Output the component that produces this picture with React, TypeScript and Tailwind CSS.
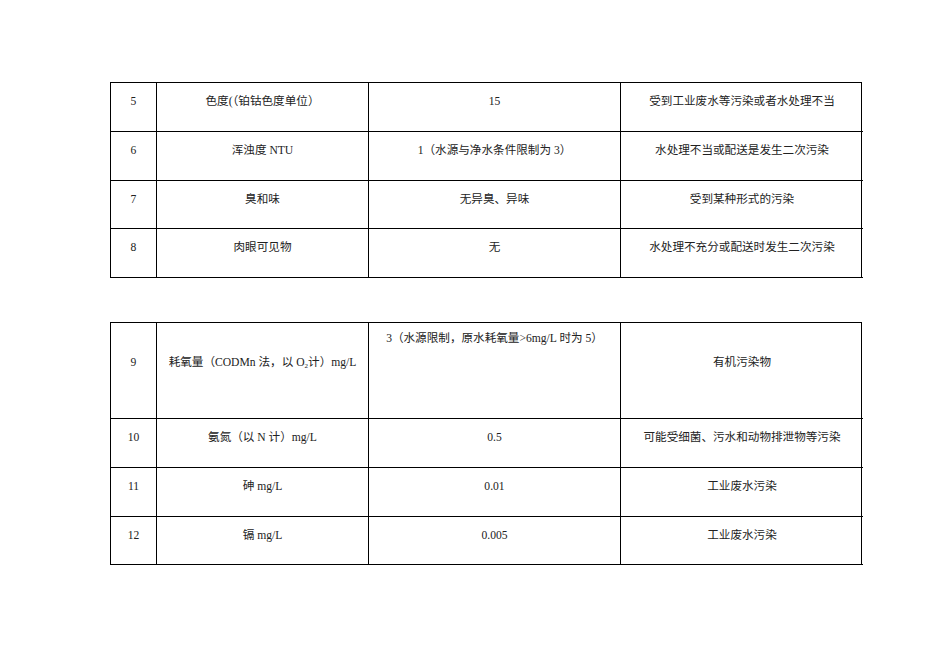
import React from "react";

type Row = {
    no: string;
    item: React.ReactNode;
    limit: React.ReactNode;
    cause: React.ReactNode;
    h: string;
    pt: string;
    limitPt?: string;
};

const table1: Row[] = [
    { no: "5", item: "色度(（铂钴色度单位）", limit: "15", cause: "受到工业废水等污染或者水处理不当", h: "h-[49px]", pt: "pt-[12px]" },
    { no: "6", item: "浑浊度 NTU", limit: "1（水源与净水条件限制为 3）", cause: "水处理不当或配送是发生二次污染", h: "h-[49px]", pt: "pt-[12px]" },
    { no: "7", item: "臭和味", limit: "无异臭、异味", cause: "受到某种形式的污染", h: "h-[48px]", pt: "pt-[12px]" },
    { no: "8", item: "肉眼可见物", limit: "无", cause: "水处理不充分或配送时发生二次污染", h: "h-[49px]", pt: "pt-[12px]" },
];

const table2: Row[] = [
    {
        no: "9",
        item: (
            <>
                耗氧量（CODMn 法，以 O<sub className="text-[7px] align-baseline relative top-[2px]">2</sub>计）mg/L
            </>
        ),
        limit: "3（水源限制，原水耗氧量>6mg/L 时为 5）",
        cause: "有机污染物",
        h: "h-[96px]",
        pt: "pt-[33px]",
        limitPt: "pt-[9px]",
    },
    { no: "10", item: "氨氮（以 N 计）mg/L", limit: "0.5", cause: "可能受细菌、污水和动物排泄物等污染", h: "h-[49px]", pt: "pt-[12px]" },
    { no: "11", item: "砷 mg/L", limit: "0.01", cause: "工业废水污染", h: "h-[49px]", pt: "pt-[12px]" },
    { no: "12", item: "镉 mg/L", limit: "0.005", cause: "工业废水污染", h: "h-[48px]", pt: "pt-[12px]" },
];

function Cell({ children, h, pt, last }: { children: React.ReactNode; h: string; pt: string; last?: boolean }) {
    return (
        <div className={`${h} ${pt} flex justify-center items-start text-center border-b border-black ${last ? "" : "border-r"}`}>
            <span className="leading-[14px] whitespace-nowrap">{children}</span>
        </div>
    );
}

function Table({ rows }: { rows: Row[] }) {
    return (
        <div className="w-[752px] grid grid-cols-[46px_212px_252px_242px] border-t border-l border-r border-black">
            {rows.map((r) => (
                <React.Fragment key={r.no}>
                    <Cell h={r.h} pt={r.pt}>{r.no}</Cell>
                    <Cell h={r.h} pt={r.pt}>{r.item}</Cell>
                    <Cell h={r.h} pt={r.limitPt ?? r.pt}>{r.limit}</Cell>
                    <Cell h={r.h} pt={r.pt} last>{r.cause}</Cell>
                </React.Fragment>
            ))}
        </div>
    );
}

export default function App() {
    return (
        <div
            className="w-[936px] h-[662px] bg-white text-[#222] text-[11.6px] pl-[110px] pt-[82px] flex flex-col gap-[44px]"
            style={{ fontFamily: '"Liberation Serif", "Noto Sans CJK SC", serif' }}
        >
            <Table rows={table1} />
            <Table rows={table2} />
        </div>
    );
}
